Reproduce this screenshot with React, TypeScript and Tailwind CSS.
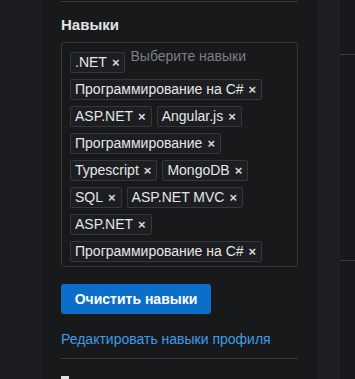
import React from "react";

const skills: string[][] = [
  [".NET"],
  ["Программирование на C#"],
  ["ASP.NET", "Angular.js"],
  ["Программирование"],
  ["Typescript", "MongoDB"],
  ["SQL", "ASP.NET MVC"],
  ["ASP.NET"],
  ["Программирование на C#"],
];

function Tag({ label }: { label: string }) {
  return (
    <span className="inline-flex h-[21px] items-center rounded-[2px] border border-[#36373b] bg-[#1d1e21] pl-[4px] pr-[5px] text-[14px] leading-none text-[#e6e6e6]">
      <span>{label}</span>
      <span className="ml-[5px] text-[13px] font-bold text-[#d8d8d8]">×</span>
    </span>
  );
}

export default function App() {
  return (
    <div
      className="flex h-[379px] w-[355px] overflow-hidden bg-[#18191c]"
      style={{ fontFamily: '"Liberation Sans", Arial, sans-serif' }}
    >
      <div className="w-[42px] shrink-0 bg-[#1c1d20]" />
      <div className="flex w-[275px] shrink-0 flex-col bg-[#18191b] px-[19px] pt-[1px]">
        <div className="h-px bg-[#3a3b3e]" />
        <div className="mt-[15px] text-[15px] font-bold leading-[16px] text-[#e2e2e2]">Навыки</div>
        <div className="mt-[9px] flex flex-col gap-[6px] rounded-[3px] border border-[#36373b] pb-[4px] pl-[8px] pr-[8px] pt-[9px]">
          {skills.map((row, i) => (
            <div key={i} className="flex items-center gap-[5px]">
              {row.map((s, j) => (
                <Tag key={j} label={s} />
              ))}
              {i === 0 && (
                <span className="-mt-[3px] self-start text-[14px] leading-[14px] text-[#7e7f82]">Выберите навыки</span>
              )}
            </div>
          ))}
        </div>
        <button className="mt-[17px] h-[32px] w-[150px] rounded-[3px] bg-[#0b6fca] text-[14px] font-bold text-white">
          Очистить навыки
        </button>
        <a className="mt-[17px] text-[14px] leading-[16px] text-[#3f9be8]">Редактировать навыки профиля</a>
        <div className="mt-[11px] h-px bg-[#3a3b3e]" />
        <div className="mt-[17px] h-[3px] w-[8px] bg-[#e2e2e2]" />
      </div>
      <div className="w-[23px] shrink-0 bg-[#1d1e21]" />
      <div className="flex flex-1 flex-col bg-[#18191c]">
        <div className="mt-[54px] h-px bg-[#3a3b3e]" />
        <div className="mt-[205px] h-px bg-[#3a3b3e]" />
      </div>
    </div>
  );
}
